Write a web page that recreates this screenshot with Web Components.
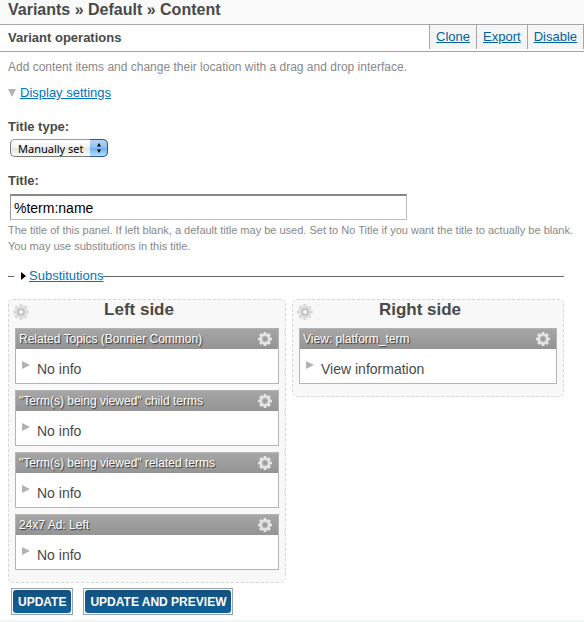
<!DOCTYPE html>
<html lang="en">
<head>
<meta charset="utf-8">
<meta name="viewport" content="width=device-width, initial-scale=1">
<title>Variants » Default » Content</title>
<style>
    body {
        margin: 0;
        background: #fff;
        color: #494949;
        font-family: Arial, "Liberation Sans", sans-serif;
        font-size: 13px;
        line-height: 16px;
    }
    main {
        padding: 7px 20px 0 8px;
    }
    .intro {
        margin: 0;
        color: #888;
        font-size: 12px;
    }
    .regions {
        display: grid;
        grid-template-columns: 139fr 136fr;
        align-items: start;
        gap: 6px;
        margin-top: 15px;
    }
    .actions {
        display: flex;
        gap: 10px;
        padding: 5px 3px;
    }
    footer {
        border-top: 2px solid #f0f5f5;
    }
</style>
</head>
<body>
    <page-title>Variants » Default » Content</page-title>
    <operations-bar heading="Variant operations">
        <a href="#clone">Clone</a>
        <a href="#export">Export</a>
        <a href="#disable">Disable</a>
    </operations-bar>
    <main>
        <p class="intro">Add content items and change their location with a drag and drop interface.</p>
        <display-settings>
            <select-field label="Title type:" options="Manually set|From pane|No title"></select-field>
            <text-field label="Title:" value="%term:name">
                The title of this panel. If left blank, a default title may be used. Set to No Title if you want the title to actually be blank. You may use substitutions in this title.
            </text-field>
            <collapsed-fieldset>Substitutions</collapsed-fieldset>
        </display-settings>
        <div class="regions">
            <panel-region heading="Left side">
                <panel-pane heading="Related Topics (Bonnier Common)">No info</panel-pane>
                <panel-pane heading='"Term(s) being viewed" child terms'>No info</panel-pane>
                <panel-pane heading='"Term(s) being viewed" related terms'>No info</panel-pane>
                <panel-pane heading="24x7 Ad: Left">No info</panel-pane>
            </panel-region>
            <panel-region heading="Right side">
                <panel-pane heading="View: platform_term">View information</panel-pane>
            </panel-region>
        </div>
        <div class="actions">
            <action-button>UPDATE</action-button>
            <action-button>UPDATE AND PREVIEW</action-button>
        </div>
    </main>
    <footer></footer>

<script>
class PageTitle extends HTMLElement {
    constructor() {
        super();
        this.attachShadow({ mode: "open" });
        this.shadowRoot.innerHTML = `
        <style>
            :host {
                display: block;
                padding: 0 8px 4px;
                background: #fafafa;
                border-bottom: 1px solid #a6a6a6;
            }
            h1 {
                margin: 0;
                font-size: 16px;
                line-height: 20px;
            }
        </style>
        <h1><slot></slot></h1>`;
    }
}
customElements.define("page-title", PageTitle);

class OperationsBar extends HTMLElement {
    constructor() {
        super();
        this.attachShadow({ mode: "open" });
        this.shadowRoot.innerHTML = `
        <style>
            :host {
                display: flex;
                justify-content: space-between;
                padding-bottom: 2px;
                border-bottom: 1px solid #a6a6a6;
            }
            h2 {
                margin: 0;
                padding: 4px 8px 0;
                font-size: 13px;
                line-height: 18px;
            }
            nav {
                display: flex;
                border-right: 1px solid #a6a6a6;
            }
            ::slotted(a) {
                padding: 4px 6px;
                background: #f5f5f5;
                border-left: 1px solid #a6a6a6;
                color: #0062a0;
            }
        </style>
        <h2></h2>
        <nav><slot></slot></nav>`;
    }
    connectedCallback() {
        this.shadowRoot.querySelector("h2").textContent = this.getAttribute("heading");
    }
}
customElements.define("operations-bar", OperationsBar);

class DisplaySettings extends HTMLElement {
    constructor() {
        super();
        this.attachShadow({ mode: "open" });
        this.shadowRoot.innerHTML = `
        <style>
            :host {
                display: block;
                margin-top: 10px;
            }
            .toggle {
                display: flex;
                align-items: center;
                gap: 4px;
                margin-bottom: 18px;
            }
            svg {
                width: 8px;
                height: 8px;
                fill: #b2b2b2;
            }
            a {
                color: #0074bd;
            }
            .closed svg {
                transform: rotate(-90deg);
            }
        </style>
        <div class="toggle">
            <svg viewBox="0 0 8 8"><path d="M0 0h8L4 8z"/></svg>
            <a href="#settings">Display settings</a>
        </div>
        <div class="body"><slot></slot></div>`;
        this.shadowRoot.querySelector("a").addEventListener("click", this._toggle.bind(this));
    }
    _toggle(event) {
        event.preventDefault();
        const body = this.shadowRoot.querySelector(".body");
        body.hidden = !body.hidden;
        this.shadowRoot.querySelector(".toggle").classList.toggle("closed", body.hidden);
    }
}
customElements.define("display-settings", DisplaySettings);

class SelectField extends HTMLElement {
    constructor() {
        super();
        this.attachShadow({ mode: "open" });
        this.shadowRoot.innerHTML = `
        <style>
            :host {
                display: block;
                margin-bottom: 16px;
            }
            label {
                display: block;
                margin-bottom: 4px;
                font-weight: bold;
            }
            .box {
                display: inline-grid;
                margin-left: 2px;
                vertical-align: top;
            }
            select, svg {
                grid-area: 1 / 1;
            }
            select {
                appearance: none;
                height: 18px;
                margin: 0;
                padding: 0 23px 0 7px;
                border: 1px solid #777;
                border-top-color: #999;
                border-radius: 5px;
                background: linear-gradient(#fff, #f3f3f3 48%, #e6e6e6 52%, #fbfbfb);
                color: #000;
                font: 11px "Lucida Grande", "Noto Sans", sans-serif;
            }
            svg {
                justify-self: end;
                width: 18px;
                height: 18px;
                pointer-events: none;
            }
        </style>
        <label for="field"></label>
        <div class="box">
            <select id="field"></select>
            <svg viewBox="0 0 18 18">
                <defs>
                    <linearGradient id="aqua" x2="0" y2="1">
                        <stop offset="0" stop-color="#bcd9f5"/>
                        <stop offset=".48" stop-color="#8fc0f0"/>
                        <stop offset=".52" stop-color="#6fb0ec"/>
                        <stop offset="1" stop-color="#b9ecff"/>
                    </linearGradient>
                </defs>
                <path fill="url(#aqua)" d="M0 0h13a5 5 0 0 1 5 5v8a5 5 0 0 1-5 5H0"/>
                <path fill="none" stroke="#32549a" d="M0 .5h13a4.500 4.500 0 0 1 4.500 4.500v8a4.500 4.500 0 0 1-4.500 4.500H0"/>
                <path d="M9 4l2 3.500h-4zM9 14l2-3.500h-4z"/>
            </svg>
        </div>`;
    }
    connectedCallback() {
        this.shadowRoot.querySelector("label").textContent = this.getAttribute("label");
        const select = this.shadowRoot.querySelector("select");
        this.getAttribute("options").split("|").forEach((text) => select.add(new Option(text)));
    }
}
customElements.define("select-field", SelectField);

class TextField extends HTMLElement {
    constructor() {
        super();
        this.attachShadow({ mode: "open" });
        this.shadowRoot.innerHTML = `
        <style>
            :host {
                display: block;
                margin-bottom: 14px;
            }
            label {
                display: block;
                margin-bottom: 5px;
                font-weight: bold;
            }
            input {
                display: block;
                box-sizing: border-box;
                width: 397px;
                max-width: 100%;
                height: 26px;
                margin: 0 0 2px 2px;
                padding: 0 3px;
                border: 1px solid #bbb;
                border-top: 2px solid #888;
                border-left-color: #999;
                background: #fff;
                color: #000;
                font: 14px Arial, "Liberation Sans", sans-serif;
            }
            p {
                margin: 0 -16px 0 0;
                color: #888;
                font-size: 11px;
            }
        </style>
        <label for="field"></label>
        <input id="field" type="text" aria-describedby="help">
        <p id="help"><slot></slot></p>`;
    }
    connectedCallback() {
        this.shadowRoot.querySelector("label").textContent = this.getAttribute("label");
        this.shadowRoot.querySelector("input").value = this.getAttribute("value");
    }
}
customElements.define("text-field", TextField);

class CollapsedFieldset extends HTMLElement {
    constructor() {
        super();
        this.attachShadow({ mode: "open" });
        this.shadowRoot.innerHTML = `
        <style>
            :host {
                display: block;
            }
            fieldset {
                min-width: 0;
                margin: 0;
                padding: 0 6px;
                border: 0;
                border-top: 1px solid #666;
            }
            legend {
                display: flex;
                align-items: center;
                gap: 3px;
                padding: 0 0 0 6px;
            }
            svg {
                width: 6px;
                height: 8px;
            }
            a {
                color: #0074bd;
            }
        </style>
        <fieldset>
            <legend>
                <svg viewBox="0 0 6 8"><path d="M1 0v8l5-4z"/></svg>
                <a href="#substitutions"><slot></slot></a>
            </legend>
        </fieldset>`;
    }
}
customElements.define("collapsed-fieldset", CollapsedFieldset);

class GearButton extends HTMLElement {
    constructor() {
        super();
        this.attachShadow({ mode: "open" });
        this.shadowRoot.innerHTML = `
        <style>
            :host {
                display: block;
                color: #e6e6e6;
            }
            button {
                display: block;
                padding: 0;
                border: 0;
                background: none;
                color: inherit;
                cursor: pointer;
            }
            svg {
                display: block;
                width: var(--gear-size, 14px);
                height: var(--gear-size, 14px);
            }
        </style>
        <button type="button" aria-label="Settings">
            <svg viewBox="-8 -8 16 16" fill="currentColor">
                <g id="teeth">
                    <rect x="-1.800" y="-8" width="3.600" height="16" rx="1"/>
                    <rect x="-8" y="-1.800" width="16" height="3.600" rx="1"/>
                </g>
                <use href="#teeth" transform="rotate(45)"/>
                <circle r="6"/>
                <circle r="3.600" fill="var(--gear-ring, #b4b4b4)"/>
                <circle r="2" fill="var(--gear-hole, #999)"/>
            </svg>
        </button>`;
    }
}
customElements.define("gear-button", GearButton);

class PanelRegion extends HTMLElement {
    constructor() {
        super();
        this.attachShadow({ mode: "open" });
        this.shadowRoot.innerHTML = `
        <style>
            :host {
                display: block;
                padding-bottom: 6px;
                border: 1px dashed #d6d6d6;
                border-radius: 5px;
                background: #f8f8f8;
            }
            header {
                display: grid;
                grid-template-columns: 24px 1fr 40px;
                height: 28px;
            }
            gear-button {
                padding: 4px;
                color: #dcdcdc;
                --gear-size: 16px;
                --gear-ring: #bbb;
                --gear-hole: #f8f8f8;
            }
            h2 {
                margin: 0;
                font-size: 17px;
                line-height: 20px;
                text-align: center;
            }
            .panes {
                padding: 0 6px;
            }
        </style>
        <header>
            <gear-button></gear-button>
            <h2></h2>
        </header>
        <div class="panes"><slot></slot></div>`;
    }
    connectedCallback() {
        this.shadowRoot.querySelector("h2").textContent = this.getAttribute("heading");
    }
}
customElements.define("panel-region", PanelRegion);

class PanelPane extends HTMLElement {
    constructor() {
        super();
        this.attachShadow({ mode: "open" });
        this.shadowRoot.innerHTML = `
        <style>
            :host {
                display: block;
                margin-bottom: 6px;
                border: 1px solid #b4b4b4;
                background: #fff;
            }
            header {
                display: flex;
                align-items: center;
                justify-content: space-between;
                height: 20px;
                padding: 0 6px 0 3px;
                background: linear-gradient(#a6a6a6, #949494);
            }
            h3 {
                margin: 0;
                color: #fff;
                font-size: 12px;
                font-weight: normal;
                text-shadow: 1px 1px 1px #333;
                white-space: nowrap;
            }
            .info {
                display: flex;
                gap: 7px;
                padding: 12px 6px 6px;
                font-size: 14px;
            }
            .info svg {
                width: 8px;
                height: 8px;
                fill: #b2b2b2;
            }
        </style>
        <header>
            <h3></h3>
            <gear-button></gear-button>
        </header>
        <div class="info">
            <svg viewBox="0 0 8 8"><path d="M0 0v8l8-4z"/></svg>
            <span><slot></slot></span>
        </div>`;
    }
    connectedCallback() {
        this.shadowRoot.querySelector("h3").textContent = this.getAttribute("heading");
    }
}
customElements.define("panel-pane", PanelPane);

class ActionButton extends HTMLElement {
    constructor() {
        super();
        this.attachShadow({ mode: "open" });
        this.shadowRoot.innerHTML = `
        <style>
            :host {
                display: block;
                padding: 1px;
                border: 1px solid #95a5b0;
            }
            button {
                display: block;
                height: 23px;
                padding: 0 5px;
                border: 0;
                border-radius: 3px;
                background: linear-gradient(#14507c, #10609c);
                color: #fff;
                font: bold 12px Arial, "Liberation Sans", sans-serif;
                cursor: pointer;
            }
        </style>
        <button type="button"><slot></slot></button>`;
    }
}
customElements.define("action-button", ActionButton);
</script>
</body>
</html>
